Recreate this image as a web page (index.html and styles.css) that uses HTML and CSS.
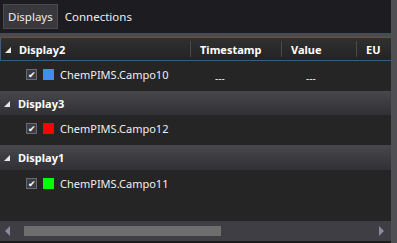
FILE: index.html
```html
<!DOCTYPE html>
<html lang="en">
<head>
  <meta charset="UTF-8" />
  <title>Displays</title>
  <link rel="stylesheet" href="styles.css">
</head>
<body>
  <div class="window">
    <div class="main">
      <div class="tabs">
        <div class="tab active">Displays</div>
        <div class="tab">Connections</div>
      </div>
      <div class="sep"></div>

      <div class="grid-head">
        <div class="hcell first"><span class="tri"></span>Display2</div>
        <div class="hcell">Timestamp</div>
        <div class="hcell">Value</div>
        <div class="hcell last">EU</div>
      </div>

      <div class="row child">
        <div class="cell first"><span class="check">&#10004;</span><span class="swatch blue"></span>ChemPIMS.Campo10</div>
        <div class="cell dash">---</div>
        <div class="cell dash">---</div>
        <div class="cell"></div>
      </div>

      <div class="row group"><span class="tri"></span>Display3</div>
      <div class="row child">
        <div class="cell first"><span class="check">&#10004;</span><span class="swatch red"></span>ChemPIMS.Campo12</div>
      </div>

      <div class="row group tall"><span class="tri"></span>Display1</div>
      <div class="row child">
        <div class="cell first"><span class="check">&#10004;</span><span class="swatch green"></span>ChemPIMS.Campo11</div>
      </div>

      <div class="filler"></div>

      <div class="hscroll">
        <span class="arrow left"></span>
        <div class="track"><div class="thumb"></div></div>
        <span class="arrow right"></span>
      </div>
      <div class="bottom"></div>
    </div>
    <div class="vbar"></div>
  </div>
</body>
</html>
```

FILE: styles.css
```css
body {
  margin: 0;
  padding: 0;
  font-family: 'Noto Sans', 'Open Sans', sans-serif;
  font-size: 11px;
  color: #f0f0f0;
  background: #252525;
}

.window {
  display: flex;
  width: 397px;
  height: 243px;
  overflow: hidden;
}

.main {
  flex: 1;
  display: flex;
  flex-direction: column;
  min-width: 0;
}

.vbar {
  width: 6px;
  background: #4f4f54;
}

.tabs {
  height: 33px;
  background: #1c1c21;
  display: flex;
  align-items: flex-start;
  padding: 4px 0 0 3px;
  box-sizing: border-box;
}

.tab {
  height: 25px;
  line-height: 23px;
  padding: 0 4px;
  box-sizing: border-box;
  border: 1px solid transparent;
  color: #eeeeee;
  font-size: 11.5px;
  margin-right: 2px;
}

.tab.active {
  background: #38383d;
  border-color: #4a4a50;
}

.sep {
  height: 4px;
  background: #4a4a4f;
}

.grid-head {
  display: grid;
  grid-template-columns: 189px 91px 75px 1fr;
  height: 24px;
  box-sizing: border-box;
  border: 1px solid #3c5d7d;
  border-right: none;
  background: linear-gradient(#303030, #232323);
  font-weight: bold;
  color: #ffffff;
}

.hcell {
  display: flex;
  align-items: center;
  padding-left: 10px;
  position: relative;
}

.hcell.first {
  padding-left: 4px;
}

.hcell + .hcell::before {
  content: "";
  position: absolute;
  left: 0;
  top: 3px;
  bottom: 3px;
  width: 1px;
  background: #4a4a4a;
}

.tri {
  width: 0;
  height: 0;
  border-left: 6px solid transparent;
  border-bottom: 6px solid #e8e8e8;
  margin-right: 8px;
  margin-top: 1px;
}

.row {
  display: grid;
  grid-template-columns: 190px 91px 75px 1fr;
}

.row.child {
  height: 30px;
  background: #252525;
}

.row.group {
  height: 24px;
  display: flex;
  align-items: center;
  padding-left: 4px;
  background: linear-gradient(#47474c, #313135);
  font-weight: bold;
  color: #ffffff;
}

.row.group.tall {
  height: 25px;
}

.cell {
  display: flex;
  align-items: center;
  height: 27px;
}

.cell.first {
  padding-left: 26px;
}

.cell.dash {
  padding-left: 25px;
  font-size: 10px;
  padding-top: 3px;
}

.check {
  width: 11px;
  height: 11px;
  box-sizing: border-box;
  border: 1px solid #6a6a72;
  background: #3c3c44;
  color: #ffffff;
  font-size: 9px;
  line-height: 10px;
  text-align: center;
  margin-right: 6px;
}

.swatch {
  width: 11px;
  height: 11px;
  margin-right: 6px;
}

.swatch.blue { background: #3e8ef1; }
.swatch.red { background: #ff0000; }
.swatch.green { background: #00ff00; }

.filler {
  flex: 1;
  background: #252525;
}

.hscroll {
  height: 20px;
  background: #3e3e44;
  display: flex;
  align-items: center;
  padding: 0 7px 0 5px;
}

.track {
  flex: 1;
  height: 10px;
  padding-left: 14px;
}

.thumb {
  width: 197px;
  height: 10px;
  background: #6e6e6e;
}

.arrow {
  width: 0;
  height: 0;
  border-top: 5px solid transparent;
  border-bottom: 5px solid transparent;
}

.arrow.left {
  border-right: 5px solid #8a8a9a;
}

.arrow.right {
  border-left: 5px solid #8a8a9a;
}

.bottom {
  height: 2px;
  background: #1b1b1b;
}
```
